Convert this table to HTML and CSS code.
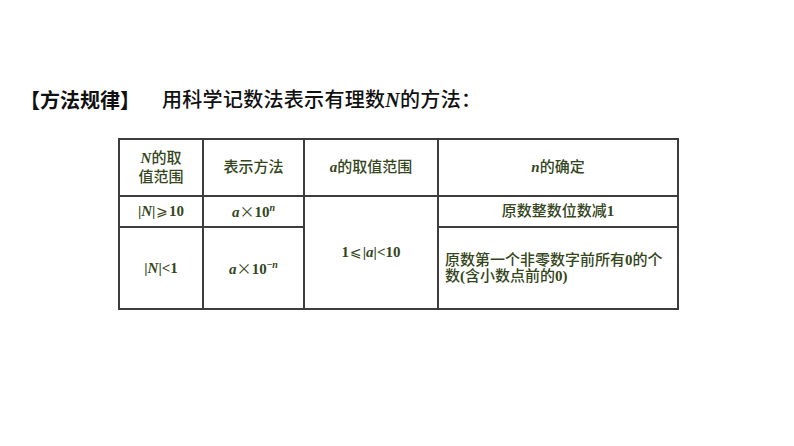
FILE: index.html
```html
<!DOCTYPE html>
<html lang="zh">
<head>
<meta charset="utf-8">
<link rel="stylesheet" href="styles.css">
</head>
<body>
<div class="page">
  <h1 class="title"><span class="tag">【方法规律】</span><span class="desc">用科学记数法表示有理数<i class="var">N</i>的方法：</span></h1>
  <table class="rules">
    <colgroup>
      <col class="c1"><col class="c2"><col class="c3"><col class="c4">
    </colgroup>
    <tr class="head">
      <td><i>N</i>的取<br>值范围</td>
      <td>表示方法</td>
      <td><i>a</i>的取值范围</td>
      <td><i>n</i>的确定</td>
    </tr>
    <tr class="r1">
      <td class="num">|<i>N</i>|<span class="rel">⩾</span>10</td>
      <td class="num"><i>a</i><span class="times">×</span>10<sup><i>n</i></sup></td>
      <td class="num" rowspan="2">1<span class="rel">⩽</span>|<i>a</i>|&lt;10</td>
      <td>原数整数位数减<b class="d">1</b></td>
    </tr>
    <tr class="r2">
      <td class="num">|<i>N</i>|&lt;1</td>
      <td class="num"><i>a</i><span class="times">×</span>10<sup>−<i>n</i></sup></td>
      <td class="left">原数第一个非零数字前所有<b class="d">0</b>的个<br>数<b class="d">(</b>含小数点前的<b class="d">0)</b></td>
    </tr>
  </table>
</div>
</body>
</html>
```
FILE: styles.css
```css
html, body {
  margin: 0;
  padding: 0;
  background: #ffffff;
}
.page {
  width: 794px;
  height: 446px;
  padding: 88px 0 0 20px;
  box-sizing: border-box;
  font-family: "Liberation Serif", "Noto Sans CJK SC", serif;
}
.title {
  margin: 0;
  font-size: 20px;
  line-height: 24px;
  font-weight: normal;
  color: #111;
  display: flex;
  white-space: nowrap;
}
.tag {
  font-weight: bold;
  font-family: "Noto Sans CJK SC", sans-serif;
}
.desc {
  margin-left: 22px;
  letter-spacing: 0.3px;
  font-family: "Liberation Serif", "Noto Sans CJK SC", serif;
  font-weight: 500;
}
.var {
  font-weight: bold;
  font-family: "Liberation Serif", serif;
}
.rules {
  margin: 26px 0 0 98px;
  border-collapse: collapse;
  table-layout: fixed;
  width: 559px;
  color: #34461c;
  font-size: 15px;
  font-weight: 500;
}
.c1 { width: 84px; }
.c2 { width: 101px; }
.c3 { width: 134px; }
.c4 { width: 240px; }
.rules td {
  border: 2px solid #3d3d3d;
  text-align: center;
  vertical-align: middle;
  padding: 0;
  line-height: 19px;
}
.rules i {
  font-style: italic;
  font-weight: bold;
}
.head td {
  height: 55px;
}
.r1 td { height: 29px; }
.r2 td { height: 80px; }
.num {
  font-weight: bold;
}
.d {
  font-weight: bold;
}
.rel {
  font-family: "DejaVu Sans", sans-serif;
  font-weight: normal;
  font-size: 14px;
  padding: 0 1px;
}
.times {
  font-family: "Noto Sans CJK SC", sans-serif;
  font-weight: normal;
  font-size: 15px;
}
.num sup {
  font-size: 10px;
  line-height: 0;
  vertical-align: 6px;
}
.rules td.left {
  text-align: left;
  padding-left: 6px;
  line-height: 16px;
}
```
